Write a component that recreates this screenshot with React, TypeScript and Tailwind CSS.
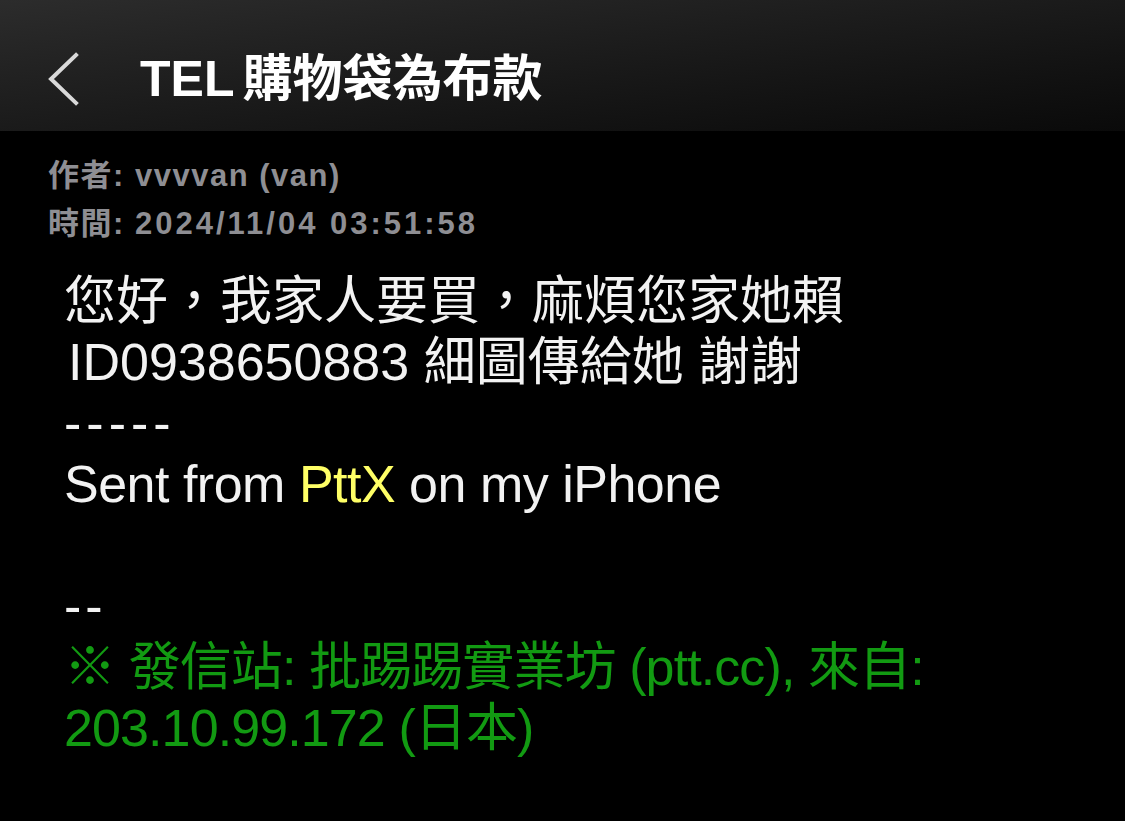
import React from 'react';

const font = "font-['Liberation_Sans','Noto_Sans_CJK_TC',sans-serif]";

const App: React.FC = () => {
  return (
    <div className={`min-h-[821px] w-full bg-black ${font}`}>
      <header className="flex h-[131px] items-center bg-gradient-to-br from-[#2c2c2c] to-[#0a0a0a] pt-[26px]">
        <div className="ml-[46px] flex w-[94px] items-center">
          <svg width="34" height="54" viewBox="0 0 34 54" fill="none">
            <path d="M30 3 L5 27 L30 51" stroke="#d9d9d9" strokeWidth="4" strokeLinecap="square" />
          </svg>
        </div>
        <h1 className="text-[50px] font-bold leading-none text-white">
          <span className="mr-[8px]">TEL</span>購物袋為布款
        </h1>
      </header>

      <div className="pl-[48px] pt-[21px] text-[31px] font-semibold leading-[48px] tracking-[1.5px] text-[#8e8e93]">
        <div>作者: vvvvan (van)</div>
        <div>
          時間: <span className="tracking-[3px]">2024/11/04 03:51:58</span>
        </div>
      </div>

      <div className="mt-[23px] whitespace-pre pl-[64px] text-[52px] leading-[61px] text-[#f2f2f2]">
        <div>您好，我家人要買，麻煩您家她賴</div>
        <div className="pl-[4px]">ID0938650883 細圖傳給她 謝謝</div>
        <div className="tracking-[5px]">-----</div>
        <div className="tracking-[-0.5px]">
          Sent from <span className="text-[#ffff66]">PttX</span> on my iPhone
        </div>
        <div> </div>
        <div className="tracking-[4px]">--</div>
        <div className="tracking-[-0.9px] text-[#129a12]">※ 發信站: 批踢踢實業坊 (ptt.cc), 來自:</div>
        <div className="tracking-[-0.9px] text-[#129a12]">203.10.99.172 (日本)</div>
      </div>
    </div>
  );
};

export default App;
